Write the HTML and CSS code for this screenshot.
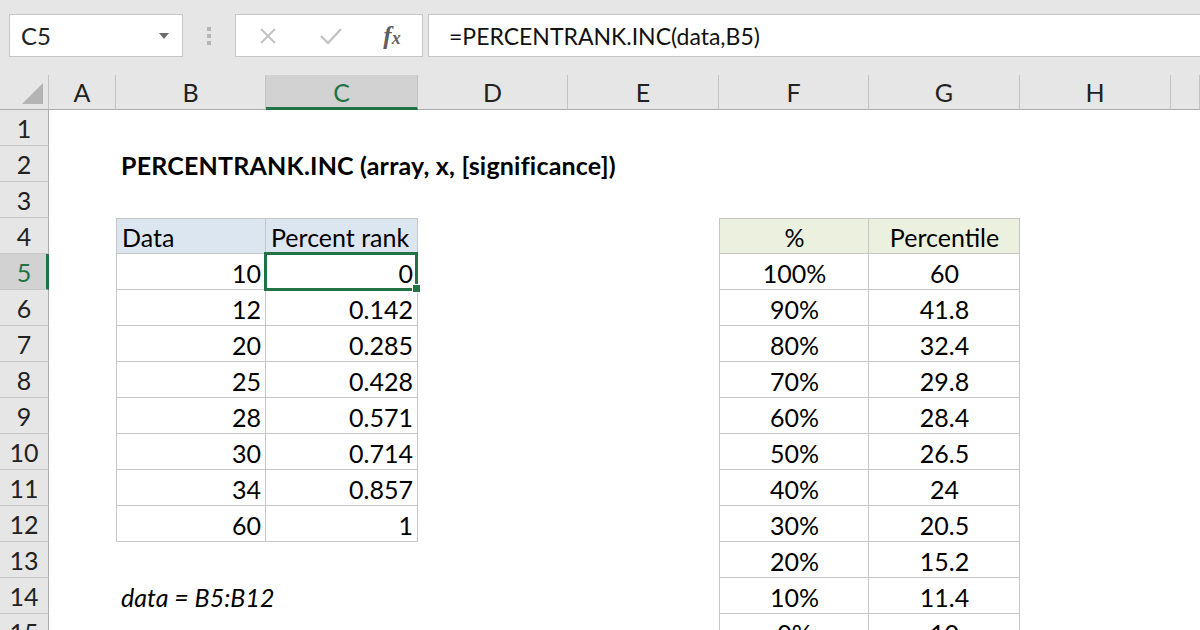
FILE: index.html
```html
<!DOCTYPE html>
<html>
<head>
<meta charset="utf-8">
<link rel="stylesheet" href="styles.css">
</head>
<body>
<div class="toolbar">
  <div class="namebox"><span>C5</span><span class="caret"></span></div>
  <div class="grip"><span></span><span></span><span></span></div>
  <div class="fbtns">
    <span class="fbtn"><svg width="18" height="18" viewBox="0 0 18 18"><path d="M2 2 L16 16 M16 2 L2 16" stroke="#c3c3c3" stroke-width="2" fill="none"/></svg></span>
    <span class="fbtn"><svg width="24" height="18" viewBox="0 0 24 18"><path d="M2 9 L9 16 L22 2" stroke="#c3c3c3" stroke-width="2.4" fill="none"/></svg></span>
    <span class="fbtn fx"><i>f</i><i class="x">x</i></span>
  </div>
  <div class="formula">=PERCENTRANK.INC(data,B5)</div>
</div>

<div class="sheet">
  <div class="corner"><span class="tri"></span></div>
  <div class="ch">A</div><div class="ch">B</div><div class="ch ch-sel">C</div><div class="ch">D</div><div class="ch">E</div><div class="ch">F</div><div class="ch">G</div><div class="ch">H</div><div class="ch"></div>

  <div class="rh">1</div><div class="c"></div><div class="c"></div><div class="c"></div><div class="c"></div><div class="c"></div><div class="c"></div><div class="c"></div><div class="c"></div><div class="c"></div>

  <div class="rh">2</div><div class="c"></div><div class="c title">PERCENTRANK.INC (array, x, [significance])</div><div class="c"></div><div class="c"></div><div class="c"></div><div class="c"></div><div class="c"></div><div class="c"></div><div class="c"></div>

  <div class="rh">3</div><div class="c"></div><div class="c"></div><div class="c"></div><div class="c"></div><div class="c"></div><div class="c"></div><div class="c"></div><div class="c"></div><div class="c"></div>

  <div class="rh">4</div><div class="c"></div><div class="c t tl tt hb">Data</div><div class="c t tt hb">Percent rank</div><div class="c"></div><div class="c"></div><div class="c t tl tt hg ctr">%</div><div class="c t tt hg ctr">Percentile</div><div class="c"></div><div class="c"></div>

  <div class="rh rh-sel">5</div><div class="c"></div><div class="c t tl num">10</div><div class="c t num sel">0</div><div class="c"></div><div class="c"></div><div class="c t tl ctr">100%</div><div class="c t ctr">60</div><div class="c"></div><div class="c"></div>

  <div class="rh">6</div><div class="c"></div><div class="c t tl num">12</div><div class="c t num">0.142</div><div class="c"></div><div class="c"></div><div class="c t tl ctr">90%</div><div class="c t ctr">41.8</div><div class="c"></div><div class="c"></div>

  <div class="rh">7</div><div class="c"></div><div class="c t tl num">20</div><div class="c t num">0.285</div><div class="c"></div><div class="c"></div><div class="c t tl ctr">80%</div><div class="c t ctr">32.4</div><div class="c"></div><div class="c"></div>

  <div class="rh">8</div><div class="c"></div><div class="c t tl num">25</div><div class="c t num">0.428</div><div class="c"></div><div class="c"></div><div class="c t tl ctr">70%</div><div class="c t ctr">29.8</div><div class="c"></div><div class="c"></div>

  <div class="rh">9</div><div class="c"></div><div class="c t tl num">28</div><div class="c t num">0.571</div><div class="c"></div><div class="c"></div><div class="c t tl ctr">60%</div><div class="c t ctr">28.4</div><div class="c"></div><div class="c"></div>

  <div class="rh">10</div><div class="c"></div><div class="c t tl num">30</div><div class="c t num">0.714</div><div class="c"></div><div class="c"></div><div class="c t tl ctr">50%</div><div class="c t ctr">26.5</div><div class="c"></div><div class="c"></div>

  <div class="rh">11</div><div class="c"></div><div class="c t tl num">34</div><div class="c t num">0.857</div><div class="c"></div><div class="c"></div><div class="c t tl ctr">40%</div><div class="c t ctr">24</div><div class="c"></div><div class="c"></div>

  <div class="rh">12</div><div class="c"></div><div class="c t tl num">60</div><div class="c t num">1</div><div class="c"></div><div class="c"></div><div class="c t tl ctr">30%</div><div class="c t ctr">20.5</div><div class="c"></div><div class="c"></div>

  <div class="rh">13</div><div class="c"></div><div class="c"></div><div class="c"></div><div class="c"></div><div class="c"></div><div class="c t tl ctr">20%</div><div class="c t ctr">15.2</div><div class="c"></div><div class="c"></div>

  <div class="rh">14</div><div class="c"></div><div class="c note">data = B5:B12</div><div class="c"></div><div class="c"></div><div class="c"></div><div class="c t tl ctr">10%</div><div class="c t ctr">11.4</div><div class="c"></div><div class="c"></div>

  <div class="rh">15</div><div class="c"></div><div class="c"></div><div class="c"></div><div class="c"></div><div class="c"></div><div class="c t tl ctr">0%</div><div class="c t ctr">10</div><div class="c"></div><div class="c"></div>
</div>
</body>
</html>
```
FILE: styles.css
```css
html, body {
  margin: 0;
  padding: 0;
}
body {
  width: 1200px;
  height: 630px;
  overflow: hidden;
  background: #ffffff;
  font-family: Lato, "Liberation Sans", sans-serif;
  color: #000;
}

/* ---------- formula toolbar ---------- */
.toolbar {
  height: 75px;
  box-sizing: border-box;
  padding-top: 14px;
  background: #e6e6e6;
  display: flex;
  align-items: flex-start;
}
.namebox {
  margin-left: 9px;
  width: 174px;
  height: 43px;
  box-sizing: border-box;
  background: #fff;
  border: 1px solid #c6c6c6;
  display: flex;
  align-items: center;
  justify-content: space-between;
  padding: 0 13px 0 11px;
  font-size: 24px;
  color: #222;
}
.caret {
  width: 0;
  height: 0;
  border-left: 5px solid transparent;
  border-right: 5px solid transparent;
  border-top: 6px solid #6e6e6e;
}
.grip {
  width: 52px;
  height: 43px;
  display: flex;
  flex-direction: column;
  align-items: center;
  justify-content: center;
  gap: 3px;
}
.grip span {
  width: 4px;
  height: 4px;
  background: #b5b5b5;
}
.fbtns {
  width: 188px;
  height: 43px;
  box-sizing: border-box;
  background: #fff;
  border: 1px solid #c6c6c6;
  display: grid;
  grid-template-columns: 63px 63px 1fr;
  align-items: center;
  justify-items: center;
}
.fbtn {
  display: flex;
  align-items: center;
  justify-content: center;
}
.fx {
  font-family: "Liberation Serif", "DejaVu Serif", serif;
  font-size: 25px;
  font-weight: bold;
  color: #5f5f5f;
}
.fx .x {
  font-size: 18px;
  margin-top: 5px;
}
.formula {
  flex: 1;
  margin-left: 5px;
  height: 43px;
  box-sizing: border-box;
  background: #fff;
  border: 1px solid #c6c6c6;
  border-right: none;
  padding-left: 20px;
  display: flex;
  align-items: center;
  font-size: 23px;
  color: #111;
}

/* ---------- sheet grid ---------- */
.sheet {
  display: grid;
  grid-template-columns: 49px 67px 150px 152px 150px 151px 150px 151px 151px 1fr;
  grid-template-rows: 35px repeat(15, 36px);
  font-size: 25px;
}
.corner {
  background: #e6e6e6;
  border-right: 1px solid #c4c4c4;
  border-bottom: 1px solid #ababab;
  box-sizing: border-box;
  position: relative;
}
.tri {
  position: absolute;
  right: 5px;
  bottom: 5px;
  width: 0;
  height: 0;
  border-left: 21px solid transparent;
  border-bottom: 21px solid #b4b4b4;
}
.ch {
  background: #e6e6e6;
  border-right: 1px solid #c4c4c4;
  border-bottom: 1px solid #ababab;
  box-sizing: border-box;
  display: flex;
  align-items: center;
  justify-content: center;
  color: #222;
}
.ch-sel {
  background: #d2d2d2;
  border-bottom: 3px solid #217346;
  color: #217346;
  padding-top: 2px;
}
.rh {
  background: #e6e6e6;
  border-right: 1px solid #ababab;
  border-bottom: 1px solid #c8c8c8;
  box-sizing: border-box;
  display: flex;
  align-items: center;
  justify-content: center;
  color: #222;
}
.rh-sel {
  background: #d2d2d2;
  border-right: 3px solid #217346;
  color: #217346;
  padding-left: 2px;
}
.c {
  box-sizing: border-box;
  display: flex;
  align-items: center;
  white-space: nowrap;
  padding: 2px 4px 0 5px;
  min-width: 0;
}
.title {
  font-weight: bold;
  letter-spacing: 0.2px;
  overflow: visible;
}
.note {
  font-style: italic;
}
.t {
  border-right: 1px solid #c6c6c6;
  border-bottom: 1px solid #c6c6c6;
}
.tl {
  border-left: 1px solid #c6c6c6;
}
.tt {
  border-top: 1px solid #c6c6c6;
}
.hb {
  background: #dce6f1;
}
.hg {
  background: #ebf1de;
}
.num {
  justify-content: flex-end;
}
.ctr {
  justify-content: center;
}
.sel {
  position: relative;
}
.sel::before {
  content: "";
  position: absolute;
  top: -2px;
  left: -2px;
  right: -1px;
  bottom: -2px;
  border: 3px solid #217346;
}
.sel::after {
  content: "";
  position: absolute;
  right: -4px;
  bottom: -4px;
  width: 7px;
  height: 7px;
  background: #217346;
  border: 1px solid #fff;
}
```
